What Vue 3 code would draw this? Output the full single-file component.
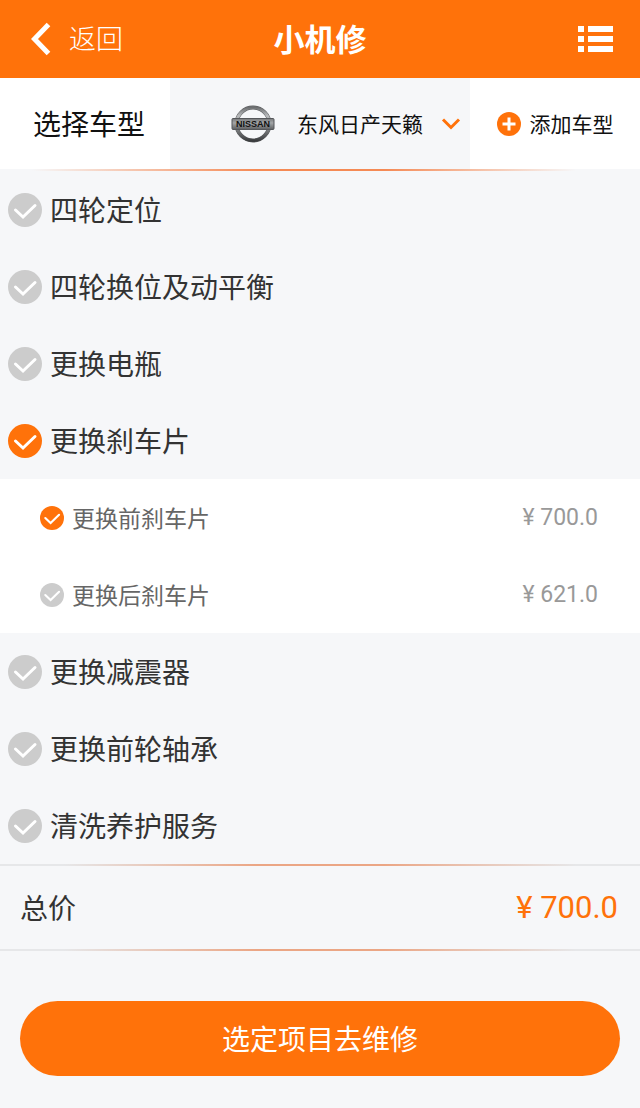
<template>
  <div class="page">
    <header class="header">
      <button class="back" type="button">
        <svg class="back-icon" viewBox="0 0 24 34" aria-hidden="true">
          <path d="M21.5 2.5 L7.5 17 L21.5 31.5" />
        </svg>
        <span>返回</span>
      </button>
      <h1 class="title">小机修</h1>
      <button class="menu" type="button" aria-label="菜单">
        <svg class="menu-icon" viewBox="0 0 35 26" aria-hidden="true">
          <path d="M0 0h6v6H0zM10 0h25v6H10zM0 10h6v6H0zM10 10h25v6H10zM0 20h6v6H0zM10 20h25v6H10z" />
        </svg>
      </button>
    </header>

    <section class="car-bar">
      <label class="car-label" for="car">选择车型</label>
      <div class="car-picker">
        <svg class="car-logo" viewBox="0 0 44 38" aria-hidden="true">
          <defs>
            <linearGradient id="ring" x1="0" y1="0" x2="0" y2="1">
              <stop offset="0" stop-color="#6d6f71" />
              <stop offset="0.25" stop-color="#b9bbbd" />
              <stop offset="0.6" stop-color="#8a8c8e" />
              <stop offset="1" stop-color="#3c3e40" />
            </linearGradient>
            <linearGradient id="plate" x1="0" y1="0" x2="0" y2="1">
              <stop offset="0" stop-color="#77797b" />
              <stop offset="0.4" stop-color="#a4a6a8" />
              <stop offset="1" stop-color="#5d5f61" />
            </linearGradient>
          </defs>
          <circle cx="22" cy="19" r="16.5" fill="none" stroke="#5a5c5e" stroke-width="4" />
          <circle cx="22" cy="19" r="16.5" fill="none" stroke="url(#ring)" stroke-width="3" />
          <rect x="1" y="13.5" width="42" height="11" rx="1" fill="url(#plate)" stroke="#55575a" stroke-width="1" />
          <text class="car-logo-text" x="22" y="22" text-anchor="middle">NISSAN</text>
        </svg>
        <select id="car" v-model="car" class="car-select">
          <option v-for="c in cars" :key="c" :value="c">{{ c }}</option>
        </select>
        <svg class="arrow-icon" viewBox="0 0 20 14" aria-hidden="true">
          <path d="M2 2.5 L10 10.5 L18 2.5" />
        </svg>
      </div>
      <button class="car-add" type="button">
        <svg class="add-icon" viewBox="0 0 24 24" aria-hidden="true">
          <circle cx="12" cy="12" r="12" />
          <path d="M12 5.5v13M5.5 12h13" />
        </svg>
        <span>添加车型</span>
      </button>
    </section>
    <div class="line line-strong"></div>

    <ul class="list">
      <li v-for="item in items" :key="item.name">
        <label class="row">
          <input v-model="item.checked" class="check-input" type="checkbox">
          <svg class="check" viewBox="0 0 34 34" aria-hidden="true">
            <circle cx="17" cy="17" r="17" />
            <path d="M7.5 17 L15 24 L27 12.5" />
          </svg>
          <span>{{ item.name }}</span>
        </label>
        <ul v-if="item.checked && item.children" class="sub-list">
          <li v-for="child in item.children" :key="child.name">
            <label class="row sub-row">
              <input v-model="child.checked" class="check-input" type="checkbox">
              <svg class="check" viewBox="0 0 34 34" aria-hidden="true">
                <circle cx="17" cy="17" r="17" />
                <path d="M7.5 17 L15 24 L27 12.5" />
              </svg>
              <span>{{ child.name }}</span>
              <span class="price">¥ {{ child.price.toFixed(1) }}</span>
            </label>
          </li>
        </ul>
      </li>
    </ul>

    <div class="line"></div>
    <div class="total">
      <span>总价</span>
      <span class="total-price">¥ {{ total.toFixed(1) }}</span>
    </div>
    <div class="line"></div>

    <div class="footer">
      <button class="submit" type="button">选定项目去维修</button>
    </div>
  </div>
</template>

<script setup>
import { computed, reactive, ref } from 'vue';

const cars = ['东风日产天籁'];
const car = ref(cars[0]);

const items = reactive([
  { name: '四轮定位', checked: false },
  { name: '四轮换位及动平衡', checked: false },
  { name: '更换电瓶', checked: false },
  {
    name: '更换刹车片',
    checked: true,
    children: [
      { name: '更换前刹车片', price: 700, checked: true },
      { name: '更换后刹车片', price: 621, checked: false }
    ]
  },
  { name: '更换减震器', checked: false },
  { name: '更换前轮轴承', checked: false },
  { name: '清洗养护服务', checked: false }
]);

const total = computed(() => {
  let sum = 0;
  items.forEach((item) => {
    if (!item.checked || !item.children) return;
    item.children.forEach((child) => {
      if (child.checked) sum += child.price;
    });
  });
  return sum;
});
</script>

<style>
body {
  margin: 0;
  background: #f6f7f9;
}
</style>

<style scoped>
.page {
  min-height: 100vh;
  background: #f6f7f9;
  color: #333;
  font-family: "Noto Sans", "Noto Sans CJK SC", sans-serif;
  font-size: 28px;
  font-weight: 400;
  line-height: 40px;
}

button,
select {
  margin: 0;
  padding: 0;
  border: 0;
  background: none;
  color: inherit;
  font: inherit;
  cursor: pointer;
}

svg {
  display: block;
  flex: none;
}

ul {
  margin: 0;
  padding: 0;
  list-style: none;
}

/* Header */
.header {
  display: grid;
  grid-template-columns: 1fr auto 1fr;
  align-items: center;
  height: 78px;
  padding: 0 27px;
  background: #ff720a;
  color: #fff;
}

.back {
  display: flex;
  align-items: center;
  justify-self: start;
  gap: 18px;
  font-size: 27px;
  font-weight: 300;
}

.back-icon {
  width: 24px;
  height: 34px;
  fill: none;
  stroke: #fff;
  stroke-width: 5;
}

.title {
  margin: 0;
  font-size: 31px;
  font-weight: 700;
}

.menu {
  justify-self: end;
}

.menu-icon {
  width: 35px;
  height: 26px;
  fill: #fff;
}

/* Car picker */
.car-bar {
  display: grid;
  grid-template-columns: 17fr 30fr 17fr;
  height: 91px;
  background: #fff;
  color: #111;
}

.car-label {
  display: flex;
  align-items: center;
  justify-content: center;
  padding-left: 8px;
}

.car-picker {
  display: flex;
  align-items: center;
  justify-content: flex-end;
  padding-right: 9px;
  background: #f6f7f9;
  font-size: 21px;
}

.car-logo {
  width: 44px;
  height: 38px;
  margin-right: 22px;
}

.car-logo-text {
  fill: #111;
  font-family: "Liberation Sans", sans-serif;
  font-size: 9px;
  font-weight: 700;
}

.car-select {
  appearance: none;
  outline: none;
}

.arrow-icon {
  width: 20px;
  height: 14px;
  margin-left: 18px;
  fill: none;
  stroke: #ff720a;
  stroke-width: 3;
}

.car-add {
  display: flex;
  align-items: center;
  justify-content: center;
  gap: 9px;
  font-size: 21px;
}

.add-icon {
  width: 24px;
  height: 24px;
  fill: #ff720a;
  stroke: #fff;
  stroke-width: 3;
}

.add-icon circle {
  stroke: none;
}

/* Divider that glows in the middle */
.line {
  height: 2px;
  background: linear-gradient(90deg, #e6e7e9 10%, #eba685 40%, #eba685 60%, #e6e7e9 90%);
}

.line-strong {
  background: linear-gradient(90deg, #f6f7f9 5%, #f58a55 40%, #f58a55 60%, #f6f7f9 90%);
}

/* Service list */
.row {
  display: flex;
  align-items: center;
  gap: 8px;
  height: 77px;
  padding: 0 22px 0 8px;
  cursor: pointer;
}

.check-input {
  position: absolute;
  opacity: 0;
}

.check {
  width: 34px;
  height: 34px;
  fill: #ccc;
}

.check path {
  fill: none;
  stroke: #fff;
  stroke-width: 3;
  stroke-linecap: round;
}

.check-input:checked + .check {
  fill: #ff720a;
}

.sub-list {
  background: #fff;
}

.sub-row {
  padding: 0 42px 0 40px;
  color: #666;
  font-size: 23px;
}

.sub-row .check {
  width: 24px;
  height: 24px;
}

.price {
  margin-left: auto;
  color: #999;
  font-family: Roboto, "Noto Sans CJK SC", sans-serif;
}

/* Total */
.total {
  display: flex;
  align-items: center;
  justify-content: space-between;
  height: 83px;
  padding: 0 22px 0 20px;
}

.total-price {
  color: #ff720a;
  font-family: Roboto, "Noto Sans CJK SC", sans-serif;
  font-size: 31px;
}

.footer {
  padding: 50px 20px 32px;
}

.submit {
  width: 100%;
  height: 75px;
  border-radius: 38px;
  background: #ff720a;
  color: #fff;
}
</style>
